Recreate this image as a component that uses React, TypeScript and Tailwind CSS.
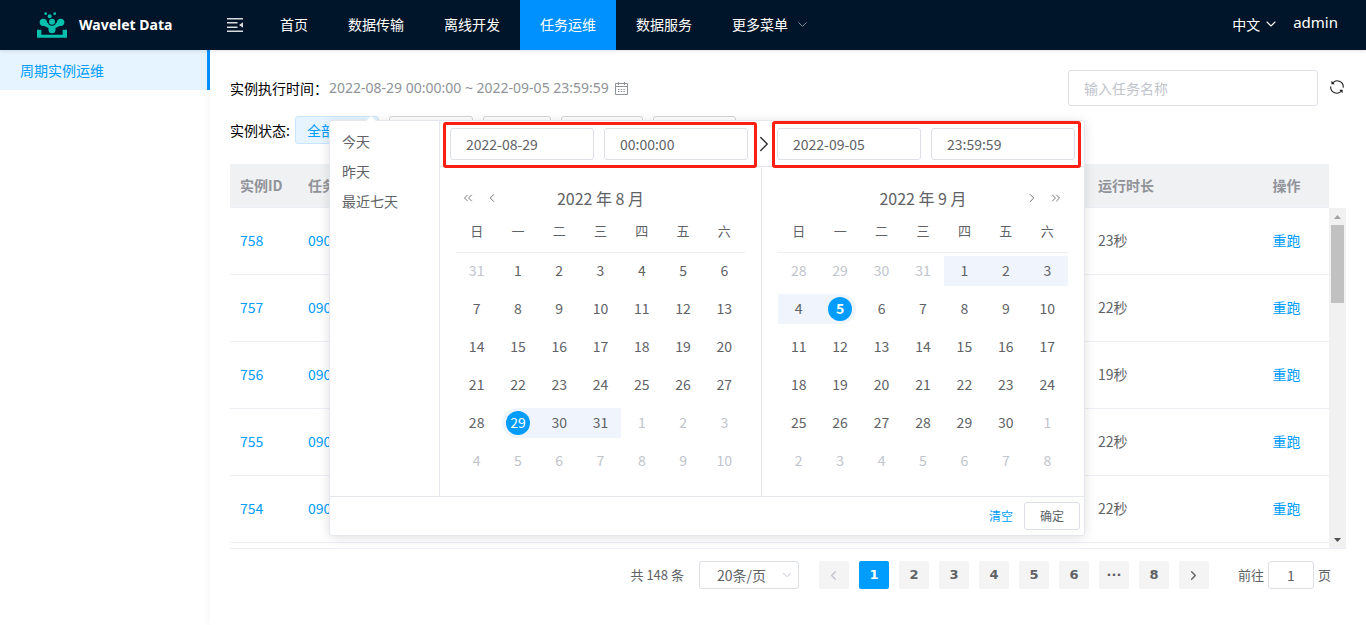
import React from "react";
import {
  ChevronDown,
  ChevronLeft,
  ChevronRight,
  ChevronsLeft,
  ChevronsRight,
} from "lucide-react";

const menu = ["首页", "数据传输", "离线开发", "任务运维", "数据服务"];
const weekdays = ["日", "一", "二", "三", "四", "五", "六"];
const rows = [
  { id: 758, name: "090", time: "23秒" },
  { id: 757, name: "090", time: "22秒" },
  { id: 756, name: "090", time: "19秒" },
  { id: 755, name: "090", time: "22秒" },
  { id: 754, name: "090", time: "22秒" },
];
const statusTabs = ["w-[84px]", "w-[68px]", "w-[82px]", "w-[83px]"];

function Logo() {
  return (
    <svg width="30" height="26" viewBox="0 0 90 78" fill="#07c1ae" aria-hidden="true">
      <path d="M0 53h13v15h64V53h13v24H0z" />
      <circle cx="19" cy="31" r="11" />
      <circle cx="71" cy="31" r="11" />
      <path d="M19 33l26 13 26-13" fill="none" stroke="#07c1ae" strokeWidth="13" />
      <path d="M45 45v8" stroke="#07c1ae" strokeWidth="21" strokeLinecap="round" />
      <circle cx="45" cy="29" r="12" fill="#001529" />
      <circle cx="45" cy="29" r="9" />
      <circle cx="38" cy="13" r="6" />
      <circle cx="26" cy="5" r="4" />
      <circle cx="53" cy="5" r="4" />
    </svg>
  );
}

function FoldIcon() {
  return (
    <svg width="16" height="14" viewBox="0 0 16 14" fill="#d9dcdf" aria-hidden="true">
      <path d="M0 0h16v1.4H0zM0 4h10.5v1.400H0zM0 8.500h10.5v1.400H0zM0 12.600h16V14H0zM16 4.200v5.600L12 7z" />
    </svg>
  );
}

function CalendarIcon() {
  return (
    <svg width="13" height="13" viewBox="0 0 13 13" fill="none" stroke="#8f9297" aria-hidden="true">
      <path d="M.5 1.5h12v11H.5zM.5 4.5h12M3.5 0v3M9.500 0v3" />
      <path d="M3 7.500h7M3 9.500h7" strokeDasharray="1.500 1.200" />
    </svg>
  );
}

function RefreshIcon() {
  return (
    <svg width="14" height="14" viewBox="0 0 14 14" fill="none" stroke="#1f1f1f" strokeWidth="1.1" aria-hidden="true">
      <path d="M3 2.600A6 6 0 0 1 13.200 7.600M11 11.400A6 6 0 0 1 .8 6.400" />
      <path d="M1.400 .8v3.400h3.400zM12.600 13.200V9.800H9.200z" fill="#1f1f1f" stroke="none" />
    </svg>
  );
}

type MonthProps = {
  title: string;
  lead: number;
  prevDays: number;
  days: number;
  from: number;
  to: number;
  start?: number;
  end?: number;
  side: "left" | "right";
};

function Month({ title, lead, prevDays, days, from, to, start, end, side }: MonthProps) {
  const cells = Array.from({ length: 42 }, (_, i) => {
    const n = i - lead + 1;
    if (n < 1) return { day: prevDays + n, inMonth: false };
    if (n > days) return { day: n - days, inMonth: false };
    return { day: n, inMonth: true };
  });
  return (
    <section className={`w-1/2 p-4 ${side === "left" ? "border-r border-[#e4e7ed]" : ""}`}>
      <div className="grid h-[30px] grid-cols-[48px_1fr_48px] items-center text-[#606266]">
        <div className="flex items-center gap-[10px] pl-[5px]">
          {side === "left" && (
            <>
              <button type="button" aria-label="前一年"><ChevronsLeft size={14} strokeWidth={1.5} /></button>
              <button type="button" aria-label="上个月"><ChevronLeft size={14} strokeWidth={1.5} /></button>
            </>
          )}
        </div>
        <h2 className="pb-px text-center text-base whitespace-nowrap">{title}</h2>
        <div className="flex items-center justify-end gap-[10px] pr-[5px]">
          {side === "right" && (
            <>
              <button type="button" aria-label="下个月"><ChevronRight size={14} strokeWidth={1.5} /></button>
              <button type="button" aria-label="后一年"><ChevronsRight size={14} strokeWidth={1.5} /></button>
            </>
          )}
        </div>
      </div>
      <table className="w-full table-fixed border-collapse text-center text-[#606266]">
        <thead>
          <tr className="h-[39px] border-b border-[#ebeef5] text-[13px]">
            {weekdays.map((d) => (
              <th key={d} className="px-0 pt-0 pb-[2px] font-normal">{d}</th>
            ))}
          </tr>
        </thead>
        <tbody>
          {[0, 1, 2, 3, 4, 5].map((w) => (
            <tr key={w} className="h-[38px]">
              {cells.slice(w * 7, w * 7 + 7).map((c, i) => {
                const inRange = c.inMonth && c.day >= from && c.day <= to;
                const isStart = c.inMonth && c.day === start;
                const isEnd = c.inMonth && c.day === end;
                return (
                  <td key={i} className="p-0">
                    <div
                      className={`flex h-[30px] items-center justify-center ${inRange ? "bg-[#f0f5fd]" : ""} ${
                        isStart ? "ml-[5px] rounded-l-full pr-[5px]" : ""
                      } ${isEnd ? "mr-[5px] rounded-r-full pl-[5px]" : ""}`}
                    >
                      <button
                        type="button"
                        className={`flex size-6 items-center justify-center rounded-full pb-[2px] text-sm ${
                          isStart || isEnd ? "bg-[#009dff] text-white" : c.inMonth ? "" : "text-[#c0c4cc]"
                        } ${isEnd ? "font-bold" : ""}`}
                      >
                        {c.day}
                      </button>
                    </div>
                  </td>
                );
              })}
            </tr>
          ))}
        </tbody>
      </table>
    </section>
  );
}

function RangeInput({ label, value }: { label: string; value: string }) {
  return (
    <input
      aria-label={label}
      defaultValue={value}
      className="h-8 w-full min-w-0 flex-1 rounded-[3px] border border-[#dcdfe6] bg-white px-[15px] text-sm text-[#606266] outline-none"
    />
  );
}

function RangePicker() {
  return (
    <div className="absolute top-[50px] left-0 z-10 w-[756px] rounded-[3px] border border-[#e4e7ed] bg-white text-[#606266] shadow-[0_2px_12px_rgba(0,0,0,0.12)]">
      <svg className="absolute -top-[6px] left-[35px]" width="12" height="7" viewBox="0 0 12 7" fill="#fff" aria-hidden="true">
        <path d="M0 7L6 1l6 6z" />
      </svg>
      <div className="flex border-b border-[#e4e7ed]">
        <ul className="w-[110px] shrink-0 border-r border-[#e4e7ed] pt-[5px] text-sm leading-[30px]">
          {["今天", "昨天", "最近七天"].map((s) => (
            <li key={s}>
              <button type="button" className="block w-full px-3 text-left">{s}</button>
            </li>
          ))}
        </ul>
        <div className="min-w-0 flex-1">
          <div className="flex h-[46px] items-center border-b border-[#e4e7ed] pr-[9px] pl-[10px]">
            <div className="flex min-w-0 flex-1 gap-[10px]">
              <RangeInput label="开始日期" value="2022-08-29" />
              <RangeInput label="开始时间" value="00:00:00" />
            </div>
            <span className="flex w-[29px] shrink-0 justify-end text-[#303133]">
              <ChevronRight size={26} strokeWidth={1.3} />
            </span>
            <div className="flex min-w-0 flex-1 gap-[10px]">
              <RangeInput label="结束日期" value="2022-09-05" />
              <RangeInput label="结束时间" value="23:59:59" />
            </div>
          </div>
          <div className="flex">
            <Month side="left" title="2022 年 8 月" lead={1} prevDays={31} days={31} from={29} to={31} start={29} />
            <Month side="right" title="2022 年 9 月" lead={4} prevDays={31} days={30} from={1} to={5} end={5} />
          </div>
        </div>
      </div>
      <div className="flex h-[38px] items-center justify-end gap-[11px] pr-1 text-xs">
        <button type="button" className="text-[#009dff]">清空</button>
        <button type="button" className="h-7 rounded-[3px] border border-[#dcdfe6] px-[15px]">确定</button>
      </div>
      <div className="pointer-events-none absolute top-px left-[113px] h-[46px] w-[314px] rounded-[3px] border-3 border-[#ff1e12]" />
      <div className="pointer-events-none absolute top-0 left-[442px] h-[47px] w-[309px] rounded-[3px] border-3 border-[#ff1e12]" />
    </div>
  );
}

function Pagination() {
  const base =
    "flex h-7 w-[30px] items-center justify-center rounded-[2px] font-['DejaVu_Sans',sans-serif] text-[13px] font-bold";
  return (
    <nav aria-label="分页" className="flex items-center justify-end pt-3 pr-[15px] text-[13px] text-[#606266]">
      <span>共 148 条</span>
      <span className="relative ml-[15px]">
        <select aria-label="每页条数" className="block h-7 w-[100px] appearance-none rounded-[3px] border border-[#dcdfe6] bg-white pl-[17px] text-sm outline-none">
          <option>20条/页</option>
        </select>
        <ChevronDown size={14} strokeWidth={1.7} className="pointer-events-none absolute top-[7px] right-[5px] text-[#c0c4cc]" />
      </span>
      <div className="ml-5 flex gap-[10px]">
        <button type="button" aria-label="上一页" disabled className={`${base} bg-[#f4f4f5] text-[#c0c4cc]`}>
          <ChevronLeft size={15} strokeWidth={2.2} />
        </button>
        {["1", "2", "3", "4", "5", "6", "···", "8"].map((p) => (
          <button key={p} type="button" className={`${base} ${p === "1" ? "bg-[#009dff] text-white" : "bg-[#f4f4f5]"}`}>
            {p}
          </button>
        ))}
        <button type="button" aria-label="下一页" className={`${base} bg-[#f4f4f5]`}>
          <ChevronRight size={15} strokeWidth={2.2} />
        </button>
      </div>
      <label className="ml-[29px] flex items-center gap-1">
        前往
        <input defaultValue="1" className="h-7 w-[46px] rounded-[3px] border border-[#dcdfe6] text-center text-sm outline-none" />
        页
      </label>
    </nav>
  );
}

export default function App() {
  return (
    <div className="flex min-h-screen flex-col bg-white font-['Noto_Sans_CJK_SC',sans-serif] text-sm text-black">
      <header className="relative z-20 flex h-[50px] items-center bg-[#001529] text-white shadow-[0_1px_4px_rgba(0,21,41,0.12)]">
        <div className="flex w-[227px] items-center gap-3 pl-[37px]">
          <Logo />
          <span className="font-['Noto_Sans',sans-serif] font-bold">Wavelet Data</span>
        </div>
        <button type="button" aria-label="收起菜单"><FoldIcon /></button>
        <nav className="ml-[17px] flex">
          {menu.map((m) => (
            <a key={m} href="#" className={`flex h-[50px] items-center px-5 pb-[2px] ${m === "任务运维" ? "bg-[#0091ff]" : ""}`}>
              {m}
            </a>
          ))}
          <a href="#" className="flex h-[50px] items-center gap-[7px] px-5 pb-[2px]">
            更多菜单
            <ChevronDown size={15} strokeWidth={1.6} className="text-[#8c949d]" />
          </a>
        </nav>
        <div className="ml-auto flex items-center gap-[14px] pr-7">
          <button type="button" className="flex items-center gap-[3px] pb-[2px]">
            中文
            <ChevronDown size={16} strokeWidth={1.6} />
          </button>
          <a href="#" className="pb-1 font-['Noto_Sans',sans-serif] text-[15px]">admin</a>
        </div>
      </header>
      <div className="flex flex-1">
        <aside className="w-[210px] shrink-0">
          <a href="#" className="flex h-10 items-center border-r-3 border-[#0091ff] bg-[#e6f4ff] px-5 text-[#009dff]">周期实例运维</a>
        </aside>
        <main className="min-w-0 flex-1 px-5 pt-5 shadow-[0_0_8px_rgba(0,0,0,0.06)]">
          <div className="flex h-9 items-center">
            <span className="w-[99px] shrink-0">实例执行时间：</span>
            <div className="relative flex h-9 items-center">
              <button type="button" className="flex items-center gap-[6px] font-['Noto_Sans',sans-serif] text-[#909399]">
                2022-08-29 00:00:00 ~ 2022-09-05 23:59:59
                <CalendarIcon />
              </button>
              <RangePicker />
            </div>
            <input
              aria-label="任务名称"
              placeholder="输入任务名称"
              className="ml-auto h-9 w-[250px] rounded-[3px] border border-[#dcdfe6] px-[15px] outline-none placeholder:text-[#c0c4cc]"
            />
            <button type="button" aria-label="刷新" className="mr-[2px] ml-3 pb-[2px]"><RefreshIcon /></button>
          </div>
          <div className="mt-[10px] flex h-7 items-center">
            <span className="w-[65px] shrink-0">实例状态:</span>
            <div className="flex gap-[10px]">
              <button type="button" className="h-7 w-[84px] rounded-[3px] border border-[#c8e6ff] bg-[#e6f4ff] pl-[11px] text-left text-[#009dff]">
                全部
              </button>
              {statusTabs.map((w, i) => (
                <button key={i} type="button" className={`h-7 rounded-[3px] border border-[#d3d4d6] bg-white ${w}`} />
              ))}
            </div>
          </div>
          <div className="mt-5 flex h-[385px] border-b border-[#ebeef5]">
            <div className="min-w-0 flex-1">
              <table className="w-full table-fixed border-separate border-spacing-0 text-left text-[#606266]">
                <colgroup>
                  <col className="w-[68px]" />
                  <col />
                  <col className="w-[156px]" />
                  <col className="w-[85px]" />
                </colgroup>
                <thead>
                  <tr className="h-11 bg-[#f0f1f3] text-[#909399]">
                    <th className="border-b border-[#ebeef5] px-[10px] pt-0 pb-[2px] whitespace-nowrap">实例ID</th>
                    <th className="border-b border-[#ebeef5] px-[10px] pt-0 pb-[2px]">任务</th>
                    <th className="border-b border-[#ebeef5] px-[10px] pt-0 pb-[2px]">运行时长</th>
                    <th className="border-b border-[#ebeef5] px-0 pt-0 pb-[2px] text-center">操作</th>
                  </tr>
                </thead>
                <tbody>
                  {rows.map((r) => (
                    <tr key={r.id} className="h-[67px]">
                      <td className="border-b border-[#ebeef5] px-[10px] pt-0 pb-[2px]"><a href="#" className="text-[#009dff]">{r.id}</a></td>
                      <td className="border-b border-[#ebeef5] px-[10px] pt-0 pb-[2px]"><a href="#" className="text-[#009dff]">{r.name}</a></td>
                      <td className="border-b border-[#ebeef5] px-[10px] pt-0 pb-[2px]">{r.time}</td>
                      <td className="border-b border-[#ebeef5] px-0 pt-0 pb-[2px] text-center"><button type="button" className="text-[#009dff]">重跑</button></td>
                    </tr>
                  ))}
                </tbody>
              </table>
            </div>
            <div className="mt-11 flex w-[17px] flex-col items-center bg-[#f1f1f1]" aria-hidden="true">
              <svg width="17" height="17" viewBox="0 0 17 17" fill="#a3a3a3"><path d="M5 11h7L8.500 7z" /></svg>
              <div className="h-[78px] w-[13px] bg-[#c1c1c1]" />
              <svg className="mt-auto" width="17" height="17" viewBox="0 0 17 17" fill="#505050"><path d="M5 7h7l-3.500 4z" /></svg>
            </div>
          </div>
          <Pagination />
        </main>
      </div>
    </div>
  );
}
